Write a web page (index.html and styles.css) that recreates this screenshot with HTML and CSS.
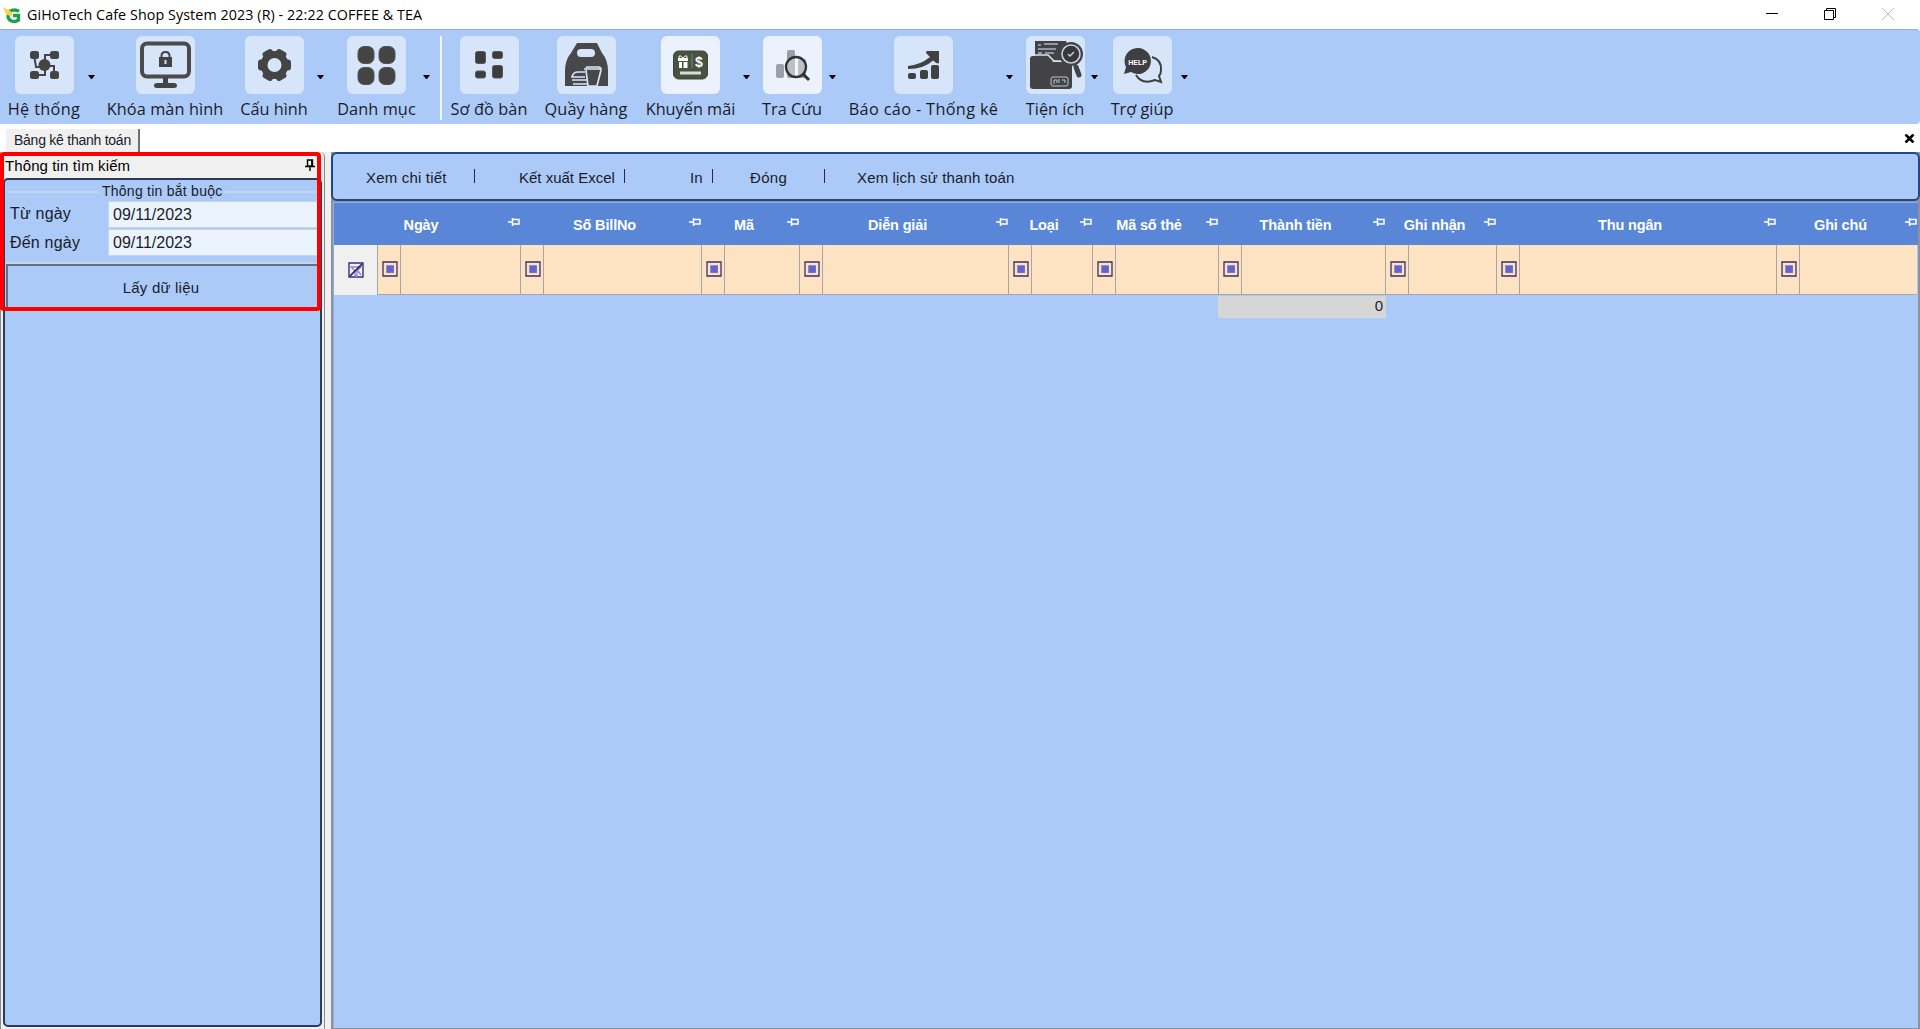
FILE: index.html
```html
<!DOCTYPE html>
<html lang="vi">
<head>
<meta charset="utf-8">
<title>GiHoTech Cafe Shop System 2023</title>
<link rel="stylesheet" href="styles.css">
</head>
<body>
<svg class="defs" width="0" height="0">
  <symbol id="pin" viewBox="0 0 12 10"><path d="M0 5h4M4.500 1v8M4.500 2.500h6.500v4.500h-6.500M4.500 7h6.500" fill="none" stroke="currentColor" stroke-width="1.500"/></symbol>
  <symbol id="match" viewBox="0 0 16 16"><path d="M1 1h14v14H1z" fill="none" stroke="#38306f" stroke-width="1.300"/><path d="M4.300 4.300h7.600v7.600H4.300z" fill="#6464cf"/></symbol>
</svg>
<header class="titlebar">
  <svg class="logo" width="18" height="18" viewBox="0 0 18 18"><path d="M16 5.500C12 2.500 5 4 5 10c0 5 6 7 10.500 4V9.500H10" fill="none" stroke="#21a04c" stroke-width="3.400"/><path d="M0 1l9 5v4L4 9 2 6z" fill="#f6d648"/></svg>
  <h1>GiHoTech Cafe Shop System 2023 (R) - 22:22 COFFEE &amp; TEA</h1>
  <div class="window-buttons">
    <svg width="12" height="12" viewBox="0 0 12 12"><path d="M0 5.500h12" stroke="#000"/></svg>
    <svg width="12" height="12" viewBox="0 0 12 12"><path d="M.5 2.500h9v9h-9zM2.500 2.500v-2h9v9h-2" fill="none" stroke="#000"/></svg>
    <svg width="12" height="12" viewBox="0 0 12 12"><path d="M0 0l12 12M12 0L0 12" stroke="#bbb"/></svg>
  </div>
</header>
<nav class="ribbon">
  <div class="tool w-system"><span class="tile"><svg viewBox="0 0 59 58" fill="#444"><path d="M19 19l2 12h9V19h9M39 39v-9h-9v9H19" fill="none" stroke="#444" stroke-width="2"/><circle cx="29.500" cy="29" r="6"/><rect x="15" y="15" width="9" height="8" rx="2.500"/><rect x="35" y="15" width="9" height="8" rx="2.500"/><rect x="15" y="35" width="9" height="8" rx="2.500"/><rect x="35" y="35" width="9" height="8" rx="2.500"/></svg></span><span class="label">Hệ thống</span></div>
  <i class="caret"></i>
  <div class="tool w-lock"><span class="tile"><svg viewBox="0 0 59 58" fill="#444"><rect x="6" y="7.500" width="47" height="33" rx="5" fill="none" stroke="#4b4b4d" stroke-width="4"/><path d="M27 41h5v6h6q3 0 3 2.500T38 52H21q-3 0-3-2.500T21 47h6z"/><path d="M25.500 22v-2q0-4 4-4t4 4v2" fill="none" stroke="#444" stroke-width="2"/><path d="M23 21h13v10H23z"/><path d="M29.500 24v4" stroke="#d7e5fb" stroke-width="2"/></svg></span><span class="label">Khóa màn hình</span></div>
  <div class="tool w-config"><span class="tile"><svg viewBox="0 0 59 58"><circle cx="29.500" cy="29" r="10.500" fill="none" stroke="#444" stroke-width="7"/><g fill="#444"><rect id="tooth" x="24" y="12.500" width="11" height="8" rx="3" transform="rotate(30 29.500 29)"/><use href="#tooth" transform="rotate(60 29.500 29)"/><use href="#tooth" transform="rotate(120 29.500 29)"/><use href="#tooth" transform="rotate(180 29.500 29)"/><use href="#tooth" transform="rotate(240 29.500 29)"/><use href="#tooth" transform="rotate(300 29.500 29)"/></g></svg></span><span class="label">Cấu hình</span></div>
  <i class="caret"></i>
  <div class="tool w-catalog"><span class="tile"><svg viewBox="0 0 59 58" fill="#444" stroke="#555"><rect x="11" y="10.500" width="16" height="17" rx="6"/><rect x="32" y="10.500" width="16" height="17" rx="6"/><rect x="11" y="31.500" width="16" height="17" rx="6"/><rect x="32" y="31.500" width="16" height="17" rx="6"/></svg></span><span class="label">Danh mục</span></div>
  <i class="caret"></i>
  <i class="divider"></i>
  <div class="tool w-tables"><span class="tile"><svg viewBox="0 0 59 58" fill="#3d3d3e" stroke="#58585a"><rect x="15.500" y="15.500" width="10" height="12" rx="2"/><rect x="32.500" y="15.500" width="10" height="7" rx="2"/><rect x="15.500" y="35" width="10" height="7" rx="2"/><rect x="32.500" y="29.500" width="10" height="12.500" rx="2"/></svg></span><span class="label">Sơ đồ bàn</span></div>
  <div class="tool w-counter"><span class="tile"><svg viewBox="0 0 59 58"><path d="M20 7h20l5 10q6 7 6 18v15H8V35q0-11 6-18z" fill="#48484a"/><rect x="20" y="13" width="18" height="8" rx="4" fill="#d7e5fb"/><path d="M27 33h18M29 32l1-1h12l2 1M29 34l2 16h9l4-16M28 41H15q1-5 6-5h7M15 44h15M16 48h14" fill="none" stroke="#d7e5fb" stroke-width="1.700"/></svg></span><span class="label">Quầy hàng</span></div>
  <div class="tool w-promo"><span class="tile bright"><svg viewBox="0 0 59 58"><rect x="12.500" y="15" width="34" height="28" rx="5" fill="#46533f" stroke="#3e453c"/><path d="M31 18v14" stroke="#7e8878"/><path d="M17 22h10v3H17zM18 26h3v6h-3zM22.500 26h4v6h-4z" fill="#fff"/><path d="M22 22q-4-4-4-1t4 1q4-4 4-1t-4 1" fill="none" stroke="#fff"/><path d="M19 37h21" stroke="#dbdcd9" stroke-width="3"/><text x="38" y="31" text-anchor="middle" class="dollar">$</text></svg></span><span class="label">Khuyến mãi</span></div>
  <i class="caret"></i>
  <div class="tool w-search"><span class="tile bright"><svg viewBox="0 0 59 58"><g fill="#9b9fa7"><rect x="13" y="28" width="8" height="14" rx="2"/><rect x="24" y="14" width="8" height="28" rx="2"/><rect x="35" y="23" width="8" height="19" rx="2"/></g><circle cx="33" cy="31" r="10" fill="#fff" fill-opacity=".35" stroke="#333" stroke-width="2.300"/><path d="M40 38l6 6" stroke="#333" stroke-width="3"/></svg></span><span class="label">Tra Cứu</span></div>
  <i class="caret"></i>
  <div class="tool w-report"><span class="tile"><svg viewBox="0 0 59 58" fill="#414142"><rect x="14" y="37" width="8" height="6" rx="2"/><rect x="26" y="34" width="8" height="9" rx="2"/><rect x="37" y="29" width="8" height="14" rx="2"/><path d="M14 30q12-1 22-9l-4-4 .5-2H45v12l-2 .5-4-3Q30 33 14 33z"/></svg></span><span class="label">Báo cáo - Thống kê</span></div>
  <i class="caret"></i>
  <div class="tool w-utility"><span class="tile"><svg viewBox="0 0 59 58"><path d="M9 5h31l6 14v6H9z" fill="#434345"/><path d="M12 9h3M18 8h14M12 13h18M12 17h4M19 17h9" stroke="#aab5c5" stroke-width="1.500"/><path d="M7 20h15l5 6h16q3 0 3 3v21q0 3-3 3H7q-3 0-3-3V23q0-3 3-3z" fill="#434345"/><path d="M6 19h16l6 6h13" fill="none" stroke="#d7e5fb" stroke-width="1.500"/><circle cx="45" cy="18" r="11" fill="#38383a" stroke="#434345" stroke-width="2"/><circle cx="45" cy="18" r="9" fill="none" stroke="#c5d2e5" stroke-width="1.600"/><path d="M42 18l2 2 4-4" fill="none" stroke="#c5d2e5" stroke-width="1.500"/><path d="M50 31l3 8" stroke="#434345" stroke-width="5" stroke-linecap="round"/><rect x="25" y="41" width="17" height="9" rx="2" fill="none" stroke="#bbc7d7"/><path d="M28 48v-4h3v3M33 43v4M36 44h3v3" fill="none" stroke="#bbc7d7"/></svg></span><span class="label">Tiện ích</span></div>
  <i class="caret"></i>
  <div class="tool w-help"><span class="tile"><svg viewBox="0 0 59 58"><path d="M39 21q10 3 9 13 0 4-2 6l2 6-6-2q-13 5-19-5" fill="#d7e5fb" stroke="#3f3f41" stroke-width="2"/><path d="M25 12a13 13 0 1 1-7 24l-7 2 2-7A13 13 0 0 1 25 12z" fill="#3f3f41"/><text x="24.500" y="28.500" text-anchor="middle" class="help">HELP</text></svg></span><span class="label">Trợ giúp</span></div>
  <i class="caret"></i>
</nav>
<div class="tabs"><span class="tab">Bảng kê thanh toán</span><svg class="tab-close" width="11" height="9" viewBox="0 0 11 9"><path d="M1.500 0.500l8 8M9.500 .5l-8 8" stroke="#000" stroke-width="2.600"/></svg></div>
<main class="workspace">
  <aside class="sidebar">
    <div class="side-title"><span>Thông tin tìm kiếm</span><svg width="10" height="13" viewBox="0 0 10 13"><path d="M2.500 1h5v6h-5zM0 7.500h10M5 8v4M6.800 1v6" fill="none" stroke="#000" stroke-width="1.400"/></svg></div>
    <div class="side-panel">
      <div class="group-title"><span>Thông tin bắt buộc</span></div>
      <div class="field"><label>Từ ngày</label><span class="date">09/11/2023</span></div>
      <div class="field"><label>Đến ngày</label><span class="date">09/11/2023</span></div>
      <div class="load">Lấy dữ liệu</div>
    </div>
    <div class="highlight"></div>
  </aside>
  <section class="content">
    <div class="actions">
      <span class="a-detail">Xem chi tiết</span><i></i><span class="a-excel">Kết xuất Excel</span><i></i><span class="a-print">In</span><i></i><span class="a-close">Đóng</span><i></i><span class="a-history">Xem lịch sử thanh toán</span>
    </div>
    <div class="grid">
      <div class="row head">
        <div class="first"><b>Ngày</b><svg><use href="#pin"/></svg></div>
        <div><b>Số BillNo</b><svg><use href="#pin"/></svg></div>
        <div><b>Mã</b><svg><use href="#pin"/></svg></div>
        <div><b>Diễn giải</b><svg><use href="#pin"/></svg></div>
        <div><b>Loại</b><svg><use href="#pin"/></svg></div>
        <div><b>Mã số thẻ</b><svg><use href="#pin"/></svg></div>
        <div><b>Thành tiền</b><svg><use href="#pin"/></svg></div>
        <div><b>Ghi nhận</b><svg><use href="#pin"/></svg></div>
        <div><b>Thu ngân</b><svg><use href="#pin"/></svg></div>
        <div><b>Ghi chú</b><svg><use href="#pin"/></svg></div>
      </div>
      <div class="row filter">
        <div class="clear"><svg width="16" height="16" viewBox="0 0 16 16"><path d="M1 1h14v14H1z" fill="#f3f1fa" stroke="#38306f" stroke-width="1.400"/><path d="M3 5h10l-4 4v5H7V9zM10 9l3 4" fill="none" stroke="#8585dd" stroke-width="1.300"/><path d="M2 14L14 2" stroke="#28204f" stroke-width="1.700"/></svg></div>
        <div><span><svg><use href="#match"/></svg></span></div>
        <div><span><svg><use href="#match"/></svg></span></div>
        <div><span><svg><use href="#match"/></svg></span></div>
        <div><span><svg><use href="#match"/></svg></span></div>
        <div><span><svg><use href="#match"/></svg></span></div>
        <div><span><svg><use href="#match"/></svg></span></div>
        <div><span><svg><use href="#match"/></svg></span></div>
        <div><span><svg><use href="#match"/></svg></span></div>
        <div><span><svg><use href="#match"/></svg></span></div>
        <div><span><svg><use href="#match"/></svg></span></div>
      </div>
      <div class="row summary"><div>0</div></div>
    </div>
  </section>
</main>
</body>
</html>
```
FILE: styles.css
```css
* { box-sizing: border-box; }
body {
  margin: 0;
  width: 1920px;
  height: 1029px;
  overflow: hidden;
  display: flex;
  flex-direction: column;
  background: #fff;
  color: #1b1b28;
  font-family: "Liberation Sans", sans-serif;
  font-size: 15px;
}
.defs { display: none; }

/* window title */
.titlebar { height: 29px; display: flex; align-items: center; padding-left: 3px; }
.titlebar h1 {
  margin: 0 auto 0 6px;
  color: #000;
  font: 400 14.3px/28px "Open Sans", sans-serif;
  letter-spacing: .08px;
}
.window-buttons { display: flex; gap: 46px; padding-right: 25px; }
.window-buttons svg { display: block; }
.window-buttons svg { position: relative; left: -1px; top: -1px; }

/* main toolbar */
.ribbon {
  height: 95px;
  display: flex;
  align-items: flex-start;
  padding: 6px 0 0 8px;
  background: #abcaf8;
  border-top: 1px solid #93afd9;
  border-radius: 0 4px 4px 0;
}
.tool { display: flex; flex-direction: column; align-items: center; flex: none; }
.tile { width: 59px; height: 58px; border-radius: 6px; background: #d7e5fb; }
.tile.bright { background: #ebf2fd; }
.tile svg { display: block; width: 59px; height: 58px; }
.label {
  margin-top: 2px;
  font: 16.300px/27px "Open Sans", sans-serif;
  white-space: nowrap;
}
.w-system .label, .w-report .label { letter-spacing: .35px; }
.w-lock .label, .w-catalog .label, .w-tables .label, .w-counter .label { letter-spacing: .1px; }
.dollar { font: bold 14px "Liberation Sans", sans-serif; fill: #fff; }
.help { font: bold 7px "Liberation Sans", sans-serif; fill: #fff; }
.caret {
  flex: none;
  width: 7px;
  margin: 39px 0 0 8px;
  border: solid transparent;
  border-width: 4px 3.500px 0;
  border-top-color: #000;
}
.divider { flex: none; width: 2px; height: 84px; margin-left: 10px; background: #f4f6fb; }
.w-system { width: 72px; }
.w-lock { width: 116px; margin-left: 12px; }
.w-config { width: 68px; margin-left: 17px; }
.w-config + .caret { margin-left: 9px; }
.w-catalog { width: 79px; margin-left: 13px; }
.w-catalog + .caret { margin-left: 7px; }
.w-tables { width: 78px; margin-left: 8px; }
.w-counter { width: 84px; margin-left: 16px; }
.w-promo { width: 91px; margin-left: 17px; }
.w-promo + .caret { margin-left: 7px; }
.w-search { width: 58px; margin-left: 13px; }
.w-report { width: 149px; margin-left: 13px; }
.w-utility { width: 58px; margin-left: 13px; }
.w-utility + .caret { margin-left: 7px; }
.w-help { width: 62px; margin-left: 13px; }

/* document tabs */
.tabs { height: 28px; display: flex; justify-content: space-between; padding: 5px 5px 0 6px; }
.tab {
  height: 23px;
  width: 134px;
  padding-left: 8px;
  line-height: 22px;
  font-size: 14px;
  letter-spacing: -.25px;
  white-space: nowrap;
  background: #f0f0f0;
  border-right: 2px solid #707070;
}
.tab-close { margin-top: 5px; }

.workspace { flex: 1; display: flex; gap: 6px; background: #f0f0f0; }

/* search panel */
.sidebar {
  position: relative;
  width: 325px;
  display: flex;
  flex-direction: column;
  padding: 0 2px 2px 2px;
  border: solid #8a8a8a;
  border-width: 0 1px 0 1px;
  border-radius: 0 5px 0 0;
}
.side-title { height: 26px; display: flex; justify-content: space-between; align-items: center; padding: 1px 7px 0 2px; color: #000; letter-spacing: .1px; }
.side-panel { flex: 1; border: 2px solid #2c3c58; border-radius: 5px; background: #abcaf8; padding: 1px 1px 0; }
.group-title { display: flex; align-items: center; gap: 3px; height: 19px; font-size: 14px; letter-spacing: .25px; white-space: nowrap; }
.group-title::before, .group-title::after { content: ""; height: 2px; background: #c4d6ef; margin-top: 2px; }
.group-title::before { width: 93px; }
.group-title::after { flex: 1; }
.field { display: flex; align-items: center; height: 28.500px; padding-left: 4px; font-size: 16px; }
.field label { width: 98px; letter-spacing: .2px; }
.date { flex: 1; height: 27px; line-height: 25px; padding-left: 4px; background: #ebf4fd; border: 1px solid #c5d6ea; }
.load {
  margin: 7px 0 0;
  height: 45px;
  line-height: 43px;
  padding-right: 5px;
  letter-spacing: .2px;
  text-align: center;
  border: solid #66717f;
  border-width: 2px 0 0 2px;
  box-shadow: 0 -2px #c4d6ef;
}
.highlight { position: absolute; left: -1px; top: 0; width: 321px; height: 159px; border: 4px solid #fe0000; border-radius: 4px; }

/* result area */
.content { flex: 1; display: flex; flex-direction: column; background: #8b929e; }
.actions {
  height: 49px;
  display: flex;
  align-items: center;
  padding: 2px 0 0 33px;
  background: #abcaf8;
  border: 2px solid #20478c;
  border-radius: 6px;
  white-space: nowrap;
}
.actions i { width: 1px; height: 14px; margin-top: -3px; background: #3a1670; }
.a-detail { width: 108px; letter-spacing: .18px; }
.a-excel { padding-left: 44px; width: 149px; }
.a-print { padding-left: 65px; width: 87px; }
.a-close { padding-left: 37px; width: 111px; letter-spacing: .3px; }
.a-history { padding-left: 32px; letter-spacing: .15px; }
.grid { flex: 1; margin: 1px 2px 1px; border: 1px solid #8fb0e4; border-width: 1px 0 0 1px; background: #abcaf8; }
.row { display: grid; grid-template-columns: 43px 143px 181px 98px 209px 84px 126px 167px 111px 280px 141px; }
.head { height: 42px; background: #5986d6; color: #fff; }
.head .first { grid-column: span 2; }
.head div { display: flex; align-items: center; }
.head b { flex: 1; text-align: center; font-size: 14.500px; padding-top: 1px; white-space: nowrap; letter-spacing: -.15px; }
.head svg { width: 12px; height: 10px; margin-top: -4px; }
.filter { height: 50px; }
.filter div { background: #fee3c3; border: solid #a5a5aa; border-width: 0 0 1px 1px; }
.filter .clear { background: #f0f0f0; border: 0; display: flex; align-items: center; justify-content: center; }
.filter span { display: flex; width: 23px; height: 100%; padding: 16px 0 0 4px; border-right: 1px solid #a5a5aa; }
.filter span svg { width: 16px; height: 16px; }
.summary div { grid-column: 8; margin: 1px -1px 0 0; height: 22px; line-height: 20px; text-align: right; padding-right: 3px; background: #d6d6d6; }
```
